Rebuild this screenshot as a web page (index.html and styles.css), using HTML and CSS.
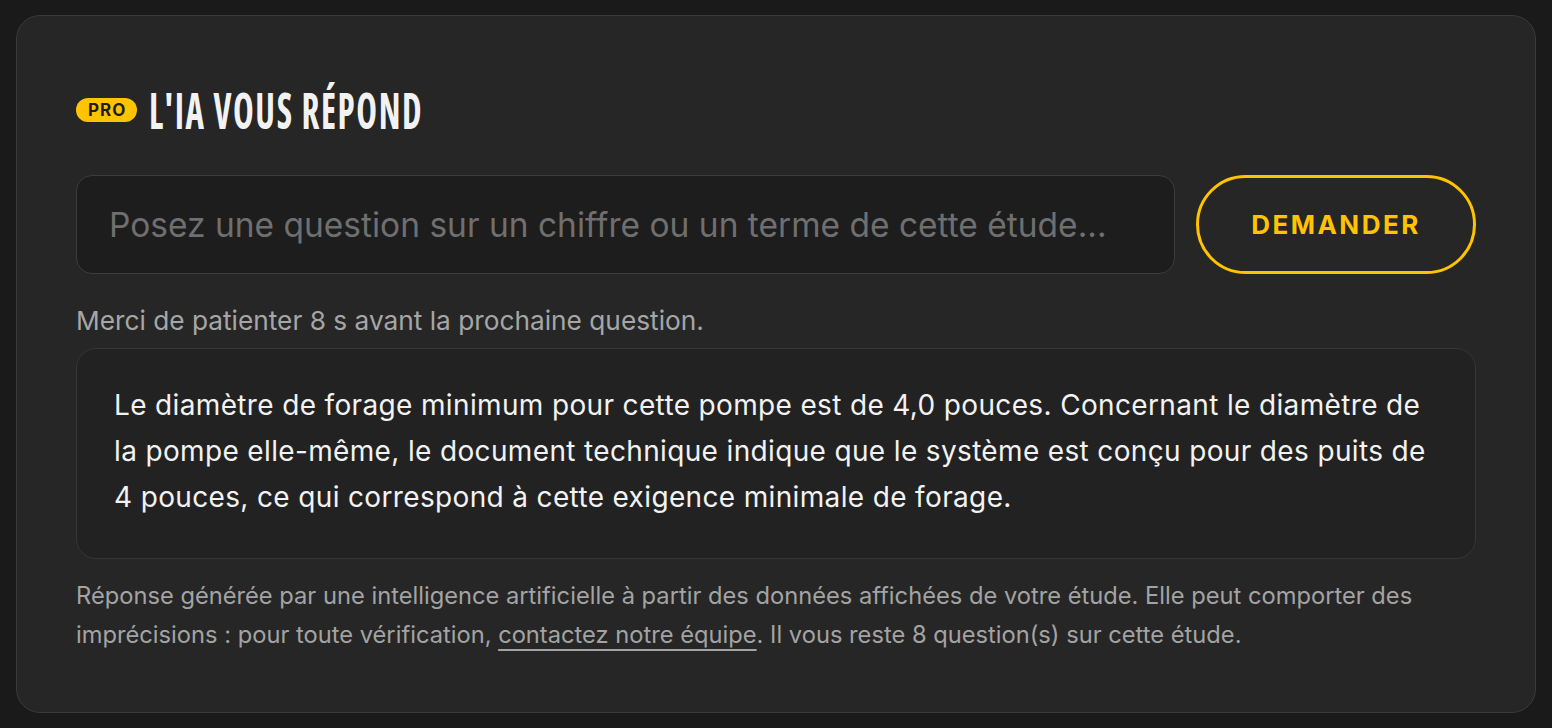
FILE: index.html
```html
<!DOCTYPE html>
<html lang="fr">
<head>
<meta charset="utf-8">
<title>L'IA vous répond</title>
<link rel="stylesheet" href="styles.css">
</head>
<body>
<section class="card">
  <h2 class="title"><span class="badge">PRO</span><span class="title-text">L'IA VOUS RÉPOND</span></h2>
  <div class="ask-row">
    <input class="ask-input" type="text" placeholder="Posez une question sur un chiffre ou un terme de cette étude...">
    <button class="ask-btn" type="button">DEMANDER</button>
  </div>
  <p class="hint">Merci de patienter 8 s avant la prochaine question.</p>
  <div class="answer">
    <p>Le diamètre de forage minimum pour cette pompe est de 4,0 pouces. Concernant le diamètre de la pompe elle-même, le document technique indique que le système est conçu pour des puits de 4 pouces, ce qui correspond à cette exigence minimale de forage.</p>
  </div>
  <p class="disclaimer">Réponse générée par une intelligence artificielle à partir des données affichées de votre étude. Elle peut comporter des imprécisions : pour toute vérification, <a href="#" class="link">contactez notre équipe</a>. Il vous reste 8 question(s) sur cette étude.</p>
</section>
</body>
</html>
```

FILE: styles.css
```css
* { box-sizing: border-box; }
html, body { margin: 0; padding: 0; }
body {
  background: #1a1a1a;
  font-family: Inter, "Noto Sans", sans-serif;
  padding: 15px 16px;
}
.card {
  background: #262626;
  border: 1px solid #3a3a3a;
  border-radius: 24px;
  padding: 74px 59px 60px;
  height: 698px;
}
.title {
  margin: 0;
  display: flex;
  align-items: center;
  gap: 12px;
  height: 40px;
}
.badge {
  background: #ffc400;
  color: #1e1e1e;
  font-family: Inter, sans-serif;
  font-weight: 700;
  font-size: 17px;
  letter-spacing: 1px;
  border-radius: 12px;
  padding: 3px 11px 3px 12px;
  line-height: 18px;
}
.title-text {
  display: inline-block;
  font-family: "Open Sans", Roboto, sans-serif;
  font-stretch: 75%;
  font-weight: 700;
  font-size: 50px;
  line-height: 40px;
  color: #f2f2f2;
  letter-spacing: 2.3px;
  transform: scaleX(0.7);
  transform-origin: left center;
  white-space: nowrap;
}
.ask-row {
  display: flex;
  gap: 21px;
  margin-top: 45px;
}
.ask-input {
  flex: 1;
  height: 99px;
  background: #1d1d1d;
  border: 1px solid #3c3c3c;
  border-radius: 16px;
  padding: 0 32px;
  font-family: Inter, sans-serif;
  font-size: 33.5px;
  color: #eee;
  outline: none;
}
.ask-input::placeholder { color: #6f6f6f; }
.ask-btn {
  width: 280px;
  height: 99px;
  background: transparent;
  border: 3px solid #ffc400;
  border-radius: 50px;
  color: #ffc400;
  font-family: Inter, sans-serif;
  font-weight: 700;
  font-size: 26px;
  letter-spacing: 2.5px;
}
.hint {
  margin: 32px 0 0;
  font-size: 26.25px;
  line-height: 30px;
  color: #a6a6a6;
}
.answer {
  margin-top: 12px;
  background: #222222;
  border: 1px solid #363636;
  border-radius: 20px;
  padding: 33px 37px 38px;
}
.answer p {
  margin: 0;
  font-size: 28px;
  letter-spacing: 0.35px;
  line-height: 46px;
  color: #f2f2f2;
}
.disclaimer {
  margin: 17px 0 0;
  font-size: 23.7px;
  line-height: 39px;
  color: #a3a3a3;
}
.link {
  color: #a3a3a3;
  text-decoration: underline;
  text-decoration-thickness: 2px;
  text-underline-offset: 6px;
}
```
